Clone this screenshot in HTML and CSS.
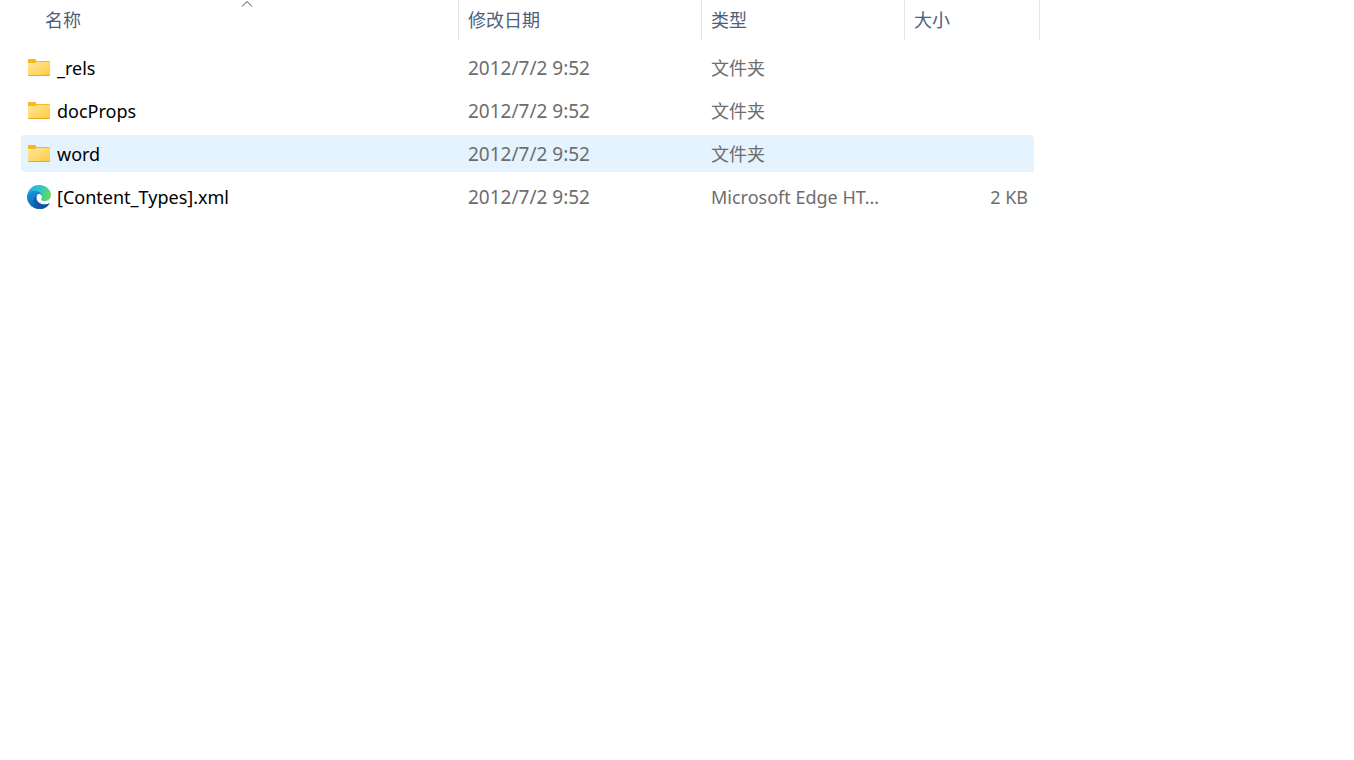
FILE: index.html
```
<!DOCTYPE html>
<html lang="zh-CN">
<head>
<meta charset="UTF-8">
<meta name="viewport" content="width=device-width, initial-scale=1">
<title>文件列表</title>
<link rel="stylesheet" href="styles.css">
</head>
<body>
<!-- shared icons -->
<svg class="icon-defs" aria-hidden="true">
<defs>
<linearGradient id="folder-front" x1="0" y1="0" x2="1" y2="1">
<stop offset="0" stop-color="#ffe8a2"/>
<stop offset="1" stop-color="#ffca3a"/>
</linearGradient>
<linearGradient id="edge-top" x1="0" y1="0.3" x2="1" y2="0.5">
<stop offset="0" stop-color="#2ba5e0"/>
<stop offset="0.5" stop-color="#2fc3cf"/>
<stop offset="1" stop-color="#66dc50"/>
</linearGradient>
<linearGradient id="edge-left" x1="0" y1="0" x2="0.3" y2="1">
<stop offset="0" stop-color="#1b9de2"/>
<stop offset="1" stop-color="#0b62b4"/>
</linearGradient>
<linearGradient id="edge-bottom" x1="0" y1="0" x2="1" y2="0">
<stop offset="0" stop-color="#1060ae"/>
<stop offset="1" stop-color="#0c4c92"/>
</linearGradient>
<symbol id="icon-folder" viewBox="0 0 24 24">
<path d="M1 4Q1 3 2 3H8Q9 3 9 4V5H22Q23 5 23 6V10H1z" fill="#f9b719"/>
<path d="M1 7H8Q9 6 10 6H23V19Q23 20 22 20H2Q1 20 1 19z" fill="url(#folder-front)"/>
<path d="M1 19H23Q23 20 22 20H2Q1 20 1 19z" fill="#e9a81f"/>
</symbol>
<symbol id="icon-edge" viewBox="0 0 256 256">
<path d="M235.700 195.500a93.700 93.700 0 0 1-10.600 4.700 101.900 101.900 0 0 1-35.900 6.400c-47.300 0-88.500-32.500-88.500-74.300a31.500 31.500 0 0 1 16.400-27.300c-42.800 1.800-53.800 46.400-53.800 72.500 0 73.900 68.100 81.400 82.800 81.400 7.900 0 19.800-2.300 27-4.600l1.300-.4a128.300 128.300 0 0 0 66.600-52.800 4 4 0 0 0-5.300-5.600z" fill="url(#edge-bottom)"/>
<path d="M105.700 241.400a79.200 79.200 0 0 1-22.700-21.300 80.700 80.700 0 0 1 29.500-120c3.200-1.500 8.500-4.100 15.600-4a32.400 32.400 0 0 1 25.700 13 31.900 31.900 0 0 1 6.300 18.700c0-.2 24.500-79.600-80-79.600-43.900 0-80 41.700-80 78.200a130.200 130.200 0 0 0 12.100 56 128 128 0 0 0 156.400 67 75.500 75.500 0 0 1-62.800-8z" fill="url(#edge-left)"/>
<path d="M152.300 148.900c-.9 1-3.400 2.500-3.400 5.600 0 2.600 1.700 5.200 4.800 7.300 14.300 10 41.400 8.600 41.500 8.600a59.600 59.600 0 0 0 30.300-8.300 61.400 61.400 0 0 0 30.400-52.900c.3-22.400-8-37.300-11.300-43.900C223.500 23.900 177.700 0 128 0A128 128 0 0 0 0 126.200c.5-36.500 36.800-66 80-66 3.500 0 23.500.3 42 10.100 16.300 8.500 24.900 18.900 30.800 29.200 6.200 10.700 7.300 24.100 7.300 29.500s-2.700 13.300-7.800 19.900z" fill="url(#edge-top)"/>
</symbol>
</defs>
</svg>

<main class="file-view">
<table class="file-table">
<colgroup>
<col>
<col class="col-date">
<col class="col-type">
<col class="col-size">
</colgroup>
<thead>
<tr>
<th class="name-head" scope="col" aria-sort="ascending">
<button type="button" class="sort-button">名称
<svg class="sort-arrow" viewBox="0 0 12 8" aria-hidden="true"><path d="M1 6.500L6 1.500L11 6.500"/></svg>
</button>
</th>
<th scope="col"><button type="button" class="sort-button">修改日期</button></th>
<th scope="col"><button type="button" class="sort-button">类型</button></th>
<th scope="col"><button type="button" class="sort-button">大小</button></th>
</tr>
</thead>
<tbody>
<tr>
<td><div class="file-name"><svg class="file-icon" aria-hidden="true"><use href="#icon-folder"/></svg><span>_rels</span></div></td>
<td class="date">2012/7/2 9:52</td>
<td>文件夹</td>
<td class="size"></td>
</tr>
<tr>
<td><div class="file-name"><svg class="file-icon" aria-hidden="true"><use href="#icon-folder"/></svg><span>docProps</span></div></td>
<td class="date">2012/7/2 9:52</td>
<td>文件夹</td>
<td class="size"></td>
</tr>
<tr class="active">
<td><div class="file-name"><svg class="file-icon" aria-hidden="true"><use href="#icon-folder"/></svg><span>word</span></div></td>
<td class="date">2012/7/2 9:52</td>
<td>文件夹</td>
<td class="size"></td>
</tr>
<tr>
<td><div class="file-name"><svg class="file-icon" aria-hidden="true"><use href="#icon-edge"/></svg><span>[Content_Types].xml</span></div></td>
<td class="date">2012/7/2 9:52</td>
<td>Microsoft Edge HT...</td>
<td class="size">2 KB</td>
</tr>
</tbody>
</table>
</main>
</body>
</html>
```
FILE: styles.css
```
:root {
--text-color: #000;
--muted-color: #6d6d6d;
--head-color: #4c607a;
--line-color: #e5e5e5;
--hover-color: #e5f3ff;
}
* {
box-sizing: border-box;
}
body {
margin: 0;
background: #fff;
color: var(--text-color);
font-family: "Noto Sans", "Noto Sans CJK SC", sans-serif;
font-size: 18px;
line-height: 24px;
}
.icon-defs {
position: absolute;
width: 0;
height: 0;
}
.file-view {
max-width: 1040px;
padding-left: 21px;
}
.file-table {
width: 100%;
table-layout: fixed;
border-collapse: separate;
border-spacing: 0;
}
.col-date {
width: 243px;
}
.col-type {
width: 203px;
}
.col-size {
width: 135px;
}
th {
height: 40px;
padding: 0;
border-right: 1px solid var(--line-color);
}
.name-head {
padding-left: 15px;
}
.sort-button {
position: relative;
display: block;
width: 100%;
height: 40px;
padding: 0 9px;
border: none;
background: none;
color: var(--head-color);
font-family: inherit;
font-size: 18px;
font-weight: 400;
line-height: 24px;
text-align: left;
}
.sort-arrow {
position: absolute;
top: 0;
left: 50%;
width: 12px;
height: 8px;
margin-left: -6px;
fill: none;
stroke: #444;
}
/* space between the header and the first row */
tbody::before {
content: "";
display: table-row;
height: 9px;
}
td {
height: 43px;
padding: 0 9px;
border-bottom: 6px solid transparent;
background-clip: padding-box;
color: var(--muted-color);
white-space: nowrap;
}
td:first-child {
padding-left: 6px;
border-radius: 2px 0 0 8px;
color: var(--text-color);
}
.date {
font-size: 19px;
}
.size {
padding-right: 6px;
border-right: 6px solid transparent;
border-radius: 0 8px 8px 0;
text-align: right;
}
.active td,
tbody tr:hover td {
background-color: var(--hover-color);
}
.file-name {
display: flex;
align-items: center;
gap: 6px;
}
.file-icon {
flex: none;
width: 24px;
height: 24px;
}
```
